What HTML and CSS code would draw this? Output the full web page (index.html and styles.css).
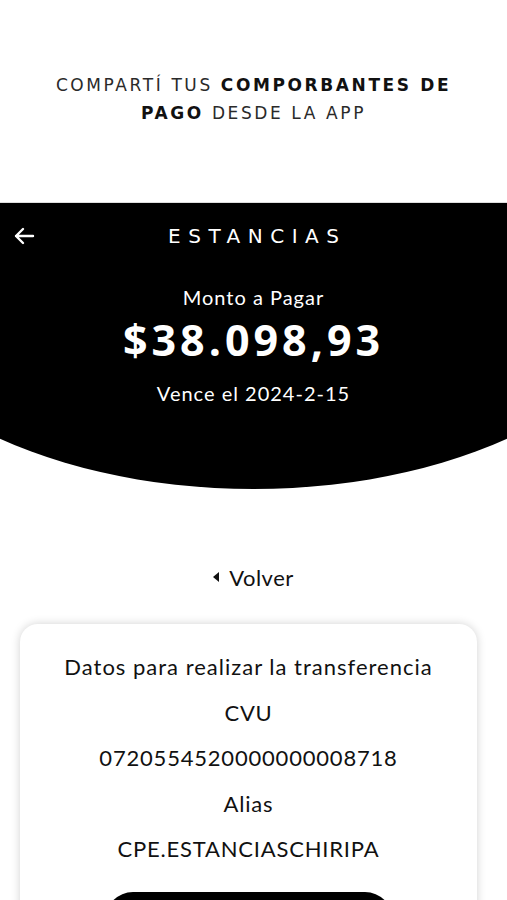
FILE: index.html
```html
<!DOCTYPE html>
<html lang="es">
<head>
    <meta charset="UTF-8">
    <meta name="viewport" content="width=device-width, initial-scale=1.0">
    <title>Estancias - Pago</title>
    <link rel="stylesheet" href="styles.css">
</head>
<body>
    <p class="promo">Compartí tus <strong>comporbantes de pago</strong> desde la app</p>

    <header class="hero">
        <div class="topbar">
            <svg class="back" width="22" height="20" viewBox="0 0 22 20">
                <path d="M20 10H3M10 3L3 10l7 7" fill="none" stroke="#fff" stroke-width="2.4" stroke-linecap="round" stroke-linejoin="round"/>
            </svg>
            <span class="brand">ESTANCIAS</span>
        </div>
        <p class="label">Monto a Pagar</p>
        <p class="amount">$38.098,93</p>
        <p class="due">Vence el 2024-2-15</p>
    </header>

    <a class="volver" href="#"><span class="tri"></span>Volver</a>

    <div class="card">
        <p class="card-title">Datos para realizar la transferencia</p>
        <p>CVU</p>
        <p>0720554520000000008718</p>
        <p>Alias</p>
        <p>CPE.ESTANCIASCHIRIPA</p>
        <button type="button" class="btn"></button>
    </div>
</body>
</html>
```

FILE: styles.css
```css
body {
    margin: 0;
    padding: 0;
    background-color: #fff;
    font-family: Lato, "Open Sans", sans-serif;
    color: #111;
    overflow: hidden;
}
.promo {
    margin: 0;
    padding: 71px 50px 0;
    height: 131px;
    text-align: center;
    text-transform: uppercase;
    font-family: "DejaVu Sans", sans-serif;
    font-size: 17px;
    line-height: 28px;
    letter-spacing: 2.6px;
    color: #2a2a2a;
}
.promo strong {
    font-weight: bold;
    color: #111;
}
.hero {
    height: 288px;
    background-color: #000;
    color: #fff;
    text-align: center;
    border-top: 1px solid #ddd;
    clip-path: ellipse(400px 222px at 50% 65px);
}
.topbar {
    position: relative;
    height: 66px;
    display: flex;
    align-items: center;
    justify-content: center;
}
.back {
    position: absolute;
    left: 13px;
    top: 23px;
}
.brand {
    font-family: "DejaVu Sans", sans-serif;
    font-size: 20px;
    letter-spacing: 7.5px;
    margin-right: -7.5px;
}
.label {
    margin: 15px 0 0;
    font-size: 20px;
    line-height: 26px;
    letter-spacing: 1px;
}
.amount {
    margin: 0;
    font-family: "Open Sans", sans-serif;
    font-weight: bold;
    font-size: 43px;
    line-height: 60px;
    letter-spacing: 4px;
}
.due {
    margin: 0;
    font-size: 20px;
    line-height: 46px;
    letter-spacing: 1px;
}
.volver {
    display: flex;
    align-items: center;
    justify-content: center;
    gap: 10px;
    margin-top: 71px;
    height: 30px;
    font-size: 22px;
    letter-spacing: 0.5px;
    color: #111;
    text-decoration: none;
}
.tri {
    width: 0;
    height: 0;
    border-top: 5px solid transparent;
    border-bottom: 5px solid transparent;
    border-right: 6px solid #111;
}
.card {
    margin: 32px 30px 0 20px;
    padding: 20px 0 10px;
    background-color: #fff;
    border-radius: 18px;
    box-shadow: 0 0 10px rgba(0, 0, 0, 0.18);
    text-align: center;
}
.card p {
    margin: 0;
    font-size: 22px;
    line-height: 45.5px;
    letter-spacing: 0.8px;
}
.card .card-title {
    letter-spacing: 1px;
}
.btn {
    display: block;
    margin: 20px auto 0;
    width: 288px;
    height: 56px;
    border: none;
    border-radius: 28px;
    background-color: #000;
}
```
